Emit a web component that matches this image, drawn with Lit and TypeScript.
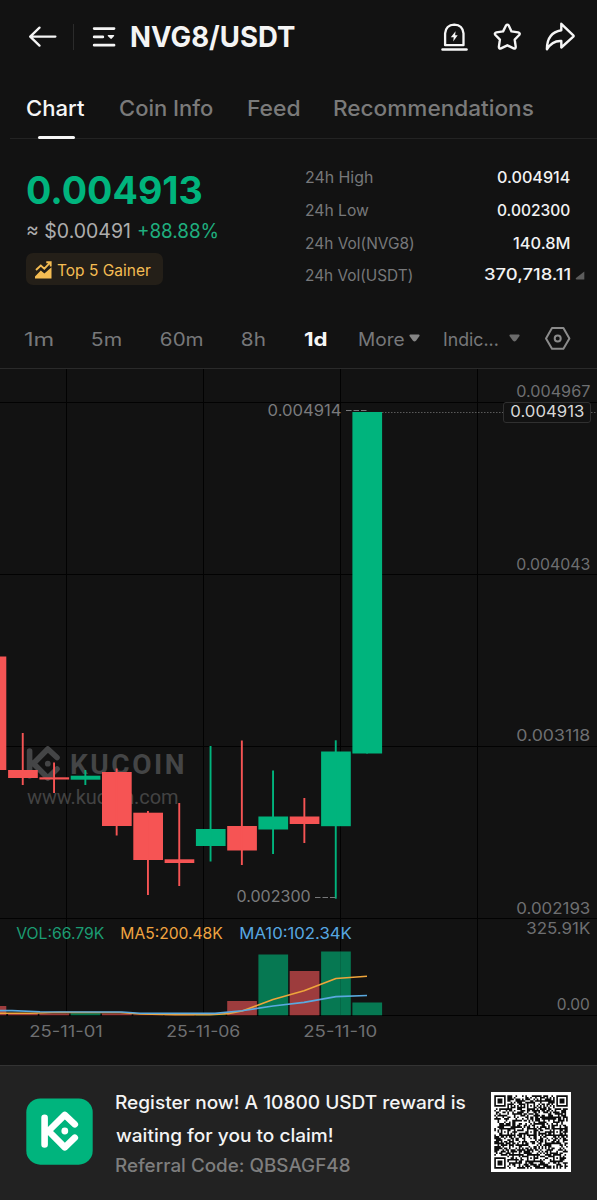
import { LitElement, html, svg, css } from "lit";
import { customElement, property } from "lit/decorators.js";

/** One line of text whose letters are widened to fill a given width. */
@customElement("fit-text")
class FitText extends LitElement {
  @property() text = "";
  @property({ type: Number }) w = 0;
  static styles = css`
    :host { display: block; flex: none; white-space: pre; }
    span { display: block; transform-origin: 0 50%; }
  `;
  updated() {
    const span = this.renderRoot.querySelector("span") as HTMLElement;
    const cs = getComputedStyle(this);
    const ctx = document.createElement("canvas").getContext("2d")!;
    ctx.font = `${cs.fontWeight} ${cs.fontSize} ${cs.fontFamily}`;
    const m = ctx.measureText(this.text);
    const ink = m.actualBoundingBoxRight + m.actualBoundingBoxLeft;
    const k = this.w / ink;
    span.style.transform = `translateX(${m.actualBoundingBoxLeft * k}px) scaleX(${k})`;
    this.style.width = `${this.w}px`;
  }
  render() {
    return html`<span>${this.text}</span>`;
  }
}

const UP = "#00b47d";
const DOWN = "#f65454";

// centre x, body top, body bottom, wick top, wick bottom, rising, volume top
const CANDLES: [number, number, number, number, number, boolean, number][] = [
  [-8.6, 656.5, 770, 656.5, 770, false, 1006],
  [22.9, 770, 778, 733, 785, false, 1013],
  [54.2, 777.3, 779.5, 762.5, 793, false, 1013.5],
  [85.5, 775.7, 779.7, 770, 785, true, 1013.2],
  [116.8, 772, 826, 768.5, 835.5, false, 1013.5],
  [148.1, 812.7, 860, 811, 895, false, 1014.5],
  [179.4, 859.3, 863, 803, 886, false, 1014.5],
  [210.7, 829, 846, 746, 861.5, true, 1014.5],
  [242, 826, 850.5, 740.5, 865, false, 1001],
  [273.2, 816.5, 829.5, 770.5, 854, true, 954.5],
  [304.5, 816.5, 824, 798, 843, false, 971],
  [335.9, 751.5, 826.2, 740.3, 898.7, true, 951.5],
  [367.2, 412, 753.5, 412, 753.5, true, 1002.5],
];

@customElement("price-chart")
class PriceChart extends LitElement {
  static styles = css`
    :host { display: block; flex: none; }
    svg { display: block; }
    .label { font: 400 15.8px "Inter", "Liberation Sans", sans-serif; }
    .brand { font: 700 28px "Roboto", sans-serif; }
    .site { font: 400 20px "Roboto", sans-serif; }
  `;

  label(t: string, x: number, cy: number, w: number, fill = "#6e6f71") {
    return svg`<text class="label" x=${x - 0.7} y=${cy + 5.8} textLength=${w + 1} lengthAdjust="spacingAndGlyphs" fill=${fill}>${t}</text>`;
  }

  render() {
    return html`<svg width="597" height="696" viewBox="0 368 597 696">
      <rect x="0" y="368" width="597" height="1" fill="#2a2a2a"></rect>
      <g fill="#020202">
        ${[66, 203, 340, 477].map((x) => svg`<rect x=${x} y="369" width="1" height="647"></rect>`)}
        ${[402, 574, 746, 918, 1015].map((y) => svg`<rect x="0" y=${y} width="597" height="1"></rect>`)}
      </g>

      <g stroke="#444546" fill="none" stroke-width="5.6" stroke-linecap="round" stroke-linejoin="round">
        <path d="M29.6 751V776M57 757.5L47.8 749L33.5 763.5L47.8 778L57 769"></path>
        <circle cx="47.8" cy="763.7" r="2.9" fill="#444546" stroke="none"></circle>
      </g>
      <text class="brand" x="70" y="774" textLength="114.5" fill="#444546">KUCOIN</text>
      <text class="site" x="27" y="803.5" textLength="151.5" fill="#434343">www.kucoin.com</text>

      ${CANDLES.map(([x, t, b, wt, wb, up, v]) => svg`
        <g fill=${up ? UP : DOWN}>
          <rect x=${x - 14.8} y=${t} width="29.7" height=${b - t}></rect>
          <rect x=${x - 1.1} y=${wt} width="1.9" height=${wb - wt}></rect>
        </g>
        <rect x=${x - 14.8} y=${v} width="29.7" height=${1015.3 - v} fill=${up ? "#067852" : "#9d3c3d"}></rect>`)}
      <rect x="340" y="952" width="1" height="63" fill="#056846"></rect>

      <g fill="none" stroke-width="1.6" stroke-linejoin="round">
        <path stroke="#efa53b" d="M0 1013.2H30L60 1012.2L120 1012.5L140 1014L175 1014.7H210L228 1013.6L242 1011L273 999.5L304 990.8L336 978.5L367 976.2"></path>
        <path stroke="#5aa9e0" d="M0 1010.6H12L40 1011.8L122 1012L140 1013.3L215 1013.4L242 1010.7L273 1006L304 1002.4L336 996.6L367 995.5"></path>
      </g>

      <path d="M382 412.5H503M591 412.5H597" stroke="#5a5a5a" stroke-dasharray="1.5 1.5"></path>
      <path d="M346 410.5H367M315 897.5H336" stroke="#77787a" stroke-width="1.2" stroke-dasharray="5.5 2"></path>
      <rect x="503.5" y="402.5" width="87" height="20" rx="2.5" fill="#121212" stroke="#303030"></rect>

      ${this.label("0.004967", 517, 391.5, 73)}
      ${this.label("0.004913", 511, 411.4, 73, "#d8d8d8")}
      ${this.label("0.004043", 517, 563.9, 73)}
      ${this.label("0.003118", 517, 735.6, 73)}
      ${this.label("0.002193", 517, 908, 73)}
      ${this.label("325.91K", 527, 928, 63)}
      ${this.label("0.00", 557.5, 1004.5, 32)}
      ${this.label("0.004914", 268.3, 409.9, 73, "#7a7b7d")}
      ${this.label("0.002300", 237.3, 896.5, 73, "#7a7b7d")}
      ${this.label("VOL:66.79K", 17, 933, 87, "#1b9c72")}
      ${this.label("MA5:200.48K", 121, 933, 101.5, "#f0a440")}
      ${this.label("MA10:102.34K", 240, 933, 111.5, "#57a8e2")}
      ${this.label("25-11-01", 30, 1030.8, 72.5)}
      ${this.label("25-11-06", 167, 1030.8, 73)}
      ${this.label("25-11-10", 304, 1030.8, 73)}
    </svg>`;
  }
}

/** Version 7 symbol, 45 modules wide. */
@customElement("qr-code")
class QrCode extends LitElement {
  static styles = css`
    :host { display: block; width: 80px; height: 80px; flex: none; background: #fff; }
    svg { display: block; }
  `;
  render() {
    const N = 45;
    const ring = (dx: number, dy: number) => Math.max(Math.abs(dx), Math.abs(dy));
    const finders = [[3, 3], [41, 3], [3, 41]];
    const aligns = [[22, 6], [6, 22], [22, 22], [38, 22], [22, 38], [38, 38]];
    let seed = 20251;
    let d = "";
    for (let y = 0; y < N; y++)
      for (let x = 0; x < N; x++) {
        seed = (Math.imul(seed, 1103515245) + 12345) & 0x7fffffff;
        let on = ((seed >> 16) & 255) < 140;
        if (x === 6 || y === 6) on = (x + y) % 2 === 0;
        for (const [cx, cy] of aligns) {
          const r = ring(x - cx, y - cy);
          if (r <= 2) on = r !== 1;
        }
        for (const [cx, cy] of finders) {
          const r = ring(x - cx, y - cy);
          if (r <= 4) on = r !== 2 && r !== 4;
        }
        if (on) d += `M${x} ${y}h1v1h-1z`;
      }
    return html`<svg width="80" height="80" viewBox="-2 -2 49 49"><path d=${d} fill="#0c0c0c"></path></svg>`;
  }
}

@customElement("app-root")
class AppRoot extends LitElement {
  static styles = css`
    :host {
      display: flex; flex-direction: column; width: 597px; height: 1200px;
      background: #121212; color: #f4f4f4; overflow: hidden;
      font-family: "Inter", "Liberation Sans", sans-serif;
    }
    svg { display: block; flex: none; }
    .top { display: flex; align-items: center; height: 73px; padding: 1px 22px 0 28px; box-sizing: border-box; flex: none; }
    .sep { width: 1px; height: 26px; background: #2b2b2b; margin: 0 18px 0 16px; }
    .title { font-size: 29px; font-weight: 700; line-height: 36px; margin-left: 14px; }
    .actions { display: flex; gap: 23px; margin-left: auto; }
    .tabs { display: flex; gap: 35px; height: 65px; margin-left: 10px; padding-left: 17px; border-bottom: 1px solid #232323; flex: none; color: #7a7a7a; font-size: 22px; font-weight: 500; line-height: 30px; }
    .tab { display: flex; flex-direction: column; align-items: center; padding-top: 20px; box-sizing: border-box; height: 66px; }
    .tab.on { color: #f6f6f6; }
    .bar { width: 37px; height: 3.4px; border-radius: 2px; background: #f6f6f6; margin-top: auto; }
    .summary { display: flex; height: 171px; padding: 0 12px 0 26px; flex: none; }
    .left { width: 280px; padding-top: 28px; }
    .price { color: #00b47d; font-size: 38.5px; font-weight: 700; line-height: 46px; margin-left: 1px; }
    .sub { display: flex; gap: 8px; font-size: 19.5px; line-height: 26px; margin: 5px 0 0 1px; color: #adadad; }
    .sub .up { color: #1fae7e; }
    .badge { display: flex; align-items: center; gap: 5px; height: 32px; width: 136.5px; box-sizing: border-box; padding: 1px 0 0 9px; margin-top: 9px; border-radius: 7px; background: #241f18; color: #f5bd53; font-size: 15.5px; line-height: 20px; }
    .badge fit-text { padding-top: 2px; }
    .stats { flex: 1; padding-top: 22px; }
    .row { display: flex; align-items: center; height: 33px; font-size: 15.8px; line-height: 24px; color: #77787a; }
    .row .val { margin-left: auto; margin-right: 15px; color: #f2f2f2; font-weight: 500; }
    .row.last { height: 32px; }
    .row.last .val { margin-right: 5px; padding-bottom: 2px; }
    .row.last svg { margin-bottom: 1px; }
    .times { display: flex; align-items: center; height: 58px; padding-left: 24px; flex: none; font-size: 18.3px; line-height: 26px; color: #77787a; }
    .times .on { color: #f6f6f6; font-weight: 700; }
    .g38 { margin-right: 39.4px; }
    .g32 { margin-right: 32.3px; }
    .g5 { margin-right: 5px; }
    .g24 { margin-right: 24px; }
    .g11 { margin-right: 11px; }
    .foot { display: flex; flex: 1; box-sizing: border-box; background: #222; border-top: 1px solid #333; padding: 0 26px; margin-top: 1px; }
    .app { display: block; margin: 32px 23px 0 0; }
    .copy { font-size: 18.3px; font-weight: 500; padding-top: 20px; }
    .copy .ln { line-height: 33px; }
    .copy .ref { line-height: 26px; color: #7e7e7e; }
    .qr { margin: 26px 0 0 auto; }
  `;

  row(label: string, lw: number, value: string, vw: number) {
    return html`<div class="row">
      <fit-text .text=${label} .w=${lw}></fit-text>
      <fit-text class="val" .text=${value} .w=${vw}></fit-text>
    </div>`;
  }

  render() {
    const caret = (c: string) => svg`<path d="M1.2 0.5H9.8Q11 0.8 10.5 2L7 6.8Q5.5 8.3 4 6.8L0.5 2Q0 0.8 1.2 0.5Z" fill=${c}></path>`;
    return html`
      <div class="top">
        <svg width="29" height="22" viewBox="0 0 29 22" fill="none" stroke="#f4f4f4" stroke-width="2.3" stroke-linecap="round" stroke-linejoin="round">
          <path d="M11.5 2.2L2.2 11.2L11.5 20.2M2.4 11.2H27.4" transform="translate(0 -.6)"></path></svg>
        <div class="sep"></div>
        <svg width="25" height="22" viewBox="0 0 25 22" fill="none" stroke="#f4f4f4" stroke-width="2.8" stroke-linecap="round">
          <path d="M2.2 2.6H22M2.2 10.9H10.8M2.2 19.2H22"></path>
          <path d="M16.3 8.9H21.4Q22.6 9 22.1 9.9L19.8 12.6Q19.1 13.3 18.4 12.6L15.8 9.9Q15.3 9 16.3 8.9Z" fill="#f4f4f4" stroke="none"></path></svg>
        <fit-text class="title" text="NVG8/USDT" w="164"></fit-text>
        <div class="actions">
          <svg width="30" height="30" viewBox="0 0 30 30" fill="none" stroke="#f6f6f6" stroke-width="2.3" stroke-linejoin="round" stroke-linecap="round">
            <path d="M6.1 23.2V11.4Q6.8 3 15.3 2.6Q23.8 3 24.5 11.4V23.2Z"></path>
            <path d="M3.5 27.5H27.5" stroke-width="2.5"></path>
            <path d="M16.6 9.2L11.8 15.3H14.7L14.2 19.4L18.7 13.2H16.1Z" fill="#f6f6f6" stroke="none"></path></svg>
          <svg width="30" height="30" viewBox="0 0 30 30" fill="none" stroke="#f6f6f6" stroke-width="2.4" stroke-linejoin="round">
            <path d="M14 3.5Q15.4 1.7 16.7 3.5L19.5 9.4L26.2 10.4Q28.6 11.1 27.2 13L22.7 17.6L23.7 24.7Q23.8 27 21.6 26.4L15.3 23.3L9 26.4Q6.8 27 6.9 24.7L7.9 17.6L3.4 13Q2 11.1 4.4 10.4L11.1 9.4Z"></path></svg>
          <svg width="30" height="30" viewBox="0 0 30 30" fill="none" stroke="#f6f6f6" stroke-width="2.4" stroke-linejoin="round">
            <path d="M16.3 1.8L28.3 13.3Q28.9 13.9 28.3 14.6L16.3 25.5V19Q7.5 18.3 1.9 27.3Q1.8 10.8 16.3 8.2Z"></path></svg>
        </div>
      </div>

      <div class="tabs">
        <div class="tab on"><fit-text text="Chart" w="58"></fit-text><div class="bar"></div></div>
        <div class="tab"><fit-text text="Coin Info" w="93"></fit-text></div>
        <div class="tab"><fit-text text="Feed" w="51"></fit-text></div>
        <div class="tab"><fit-text text="Recommendations" w="199"></fit-text></div>
      </div>

      <div class="summary">
        <div class="left">
          <fit-text class="price" text="0.004913" w="175"></fit-text>
          <div class="sub"><fit-text text="≈ $0.00491" w="103"></fit-text><fit-text class="up" text="+88.88%" w="79"></fit-text></div>
          <div class="badge">
            <svg width="17" height="18" viewBox="0 0 17 18">
              <path d="M1 9L5.8 4.6L9.3 7.6L14.6 2.2M11.3 1.2H15.7V5.6" fill="none" stroke="#f5bd53" stroke-width="1.9"></path>
              <path d="M0 15.5L5.8 9.6L9.4 12.6L16.5 6.2V17.6H0Z" fill="#f5bd53"></path></svg>
            <fit-text text="Top 5 Gainer" w="94"></fit-text>
          </div>
        </div>
        <div class="stats">
          ${this.row("24h High", 67, "0.004914", 73)}
          ${this.row("24h Low", 63, "0.002300", 73)}
          ${this.row("24h Vol(NVG8)", 108, "140.8M", 57)}
          <div class="row last">
            <fit-text text="24h Vol(USDT)" w="106.5"></fit-text>
            <fit-text class="val" text="370,718.11" w="86.5"></fit-text>
            <svg width="10" height="9" viewBox="0 0 10 9"><path d="M9.3 0.5V8.5H1.5Q0 8.4 1 7Z" fill="#5c5c5c"></path></svg>
          </div>
        </div>
      </div>

      <div class="times">
        <fit-text class="g38" text="1m" w="29"></fit-text>
        <fit-text class="g38" text="5m" w="29"></fit-text>
        <fit-text class="g38" text="60m" w="41.5"></fit-text>
        <fit-text class="g38" text="8h" w="23"></fit-text>
        <fit-text class="on g32" text="1d" w="23"></fit-text>
        <fit-text class="g5" text="More" w="45"></fit-text>
        <svg class="g24" width="11" height="10" viewBox="0 0 11 10">${caret("#858585")}</svg>
        <fit-text class="g11" text="Indic..." w="53.5"></fit-text>
        <svg class="g24" width="11" height="10" viewBox="0 0 11 10">${caret("#6b6b6b")}</svg>
        <svg width="27" height="26" viewBox="0 0 27 26" fill="none" stroke="#8b8b8b" stroke-width="2" stroke-linejoin="round">
          <path d="M8 2H19.4L25.4 12.4L19.4 22.8H8L2 12.4Z"></path><circle cx="13.7" cy="12.4" r="3"></circle></svg>
      </div>

      <price-chart></price-chart>

      <div class="foot">
        <svg class="app" width="67" height="67" viewBox="26 1098.5 67 67">
          <rect x="26.3" y="1099" width="66.4" height="66.2" rx="14" fill="#00b47d"></rect>
          <path d="M44.6 1118.2V1145M74.8 1124.8L64.8 1115.4L48.5 1131.5L64.8 1147.8L74.8 1138.2" fill="none" stroke="#fff" stroke-width="6.6" stroke-linecap="round" stroke-linejoin="round"></path>
          <circle cx="64.8" cy="1131.5" r="3.4" fill="#fff"></circle>
        </svg>
        <div class="copy">
          <fit-text class="ln" text="Register now! A 10800 USDT reward is" w="350"></fit-text>
          <fit-text class="ln" text="waiting for you to claim!" w="217"></fit-text>
          <fit-text class="ref" text="Referral Code: QBSAGF48" w="234"></fit-text>
        </div>
        <qr-code class="qr"></qr-code>
      </div>`;
  }
}
